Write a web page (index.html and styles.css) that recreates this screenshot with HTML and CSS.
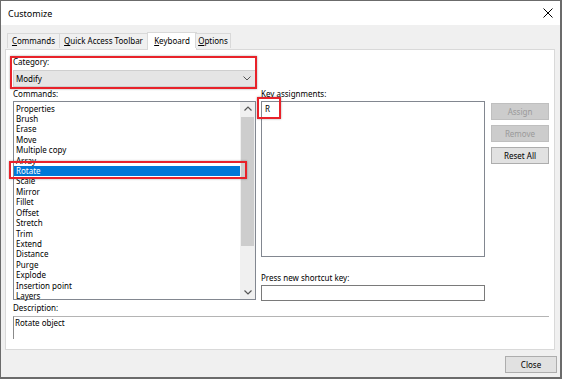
FILE: index.html
```html
<!DOCTYPE html>
<html>
<head>
<meta charset="utf-8">
<link rel="stylesheet" href="styles.css">
</head>
<body>
<div class="window">
  <div class="titlebar">
    <span class="title">Customize</span>
    <svg class="close-x" width="10" height="10" viewBox="0 0 10 10"><path d="M0.5 0.5 L9.5 9.5 M9.5 0.5 L0.5 9.5" stroke="#000" stroke-width="1" fill="none"/></svg>
  </div>
  <div class="body">
    <div class="tabs">
      <div class="tab t-commands"><u>C</u>ommands</div>
      <div class="tab t-qat"><u>Q</u>uick Access Toolbar</div>
      <div class="tab t-kbd active"><u>K</u>eyboard</div>
      <div class="tab t-opt"><u>O</u>ptions</div>
    </div>
    <div class="panel">
      <div class="columns">
        <div class="col-left">
          <div class="label">Category:</div>
          <div class="combo">
            <span>Modify</span>
            <svg class="chev" width="8" height="5" viewBox="0 0 8 5"><path d="M0.5 0.5 L4 4 L7.5 0.5" stroke="#555" stroke-width="1" fill="none"/></svg>
          </div>
          <div class="label">Commands:</div>
          <div class="listbox">
            <div class="items">
              <div class="item">Properties</div>
              <div class="item">Brush</div>
              <div class="item">Erase</div>
              <div class="item">Move</div>
              <div class="item">Multiple copy</div>
              <div class="item">Array</div>
              <div class="item selected">Rotate</div>
              <div class="item">Scale</div>
              <div class="item">Mirror</div>
              <div class="item">Fillet</div>
              <div class="item">Offset</div>
              <div class="item">Stretch</div>
              <div class="item">Trim</div>
              <div class="item">Extend</div>
              <div class="item">Distance</div>
              <div class="item">Purge</div>
              <div class="item">Explode</div>
              <div class="item">Insertion point</div>
              <div class="item">Layers</div>
            </div>
            <div class="scrollbar">
              <svg class="sb-arrow" width="8" height="5" viewBox="0 0 8 5"><path d="M0.5 4.5 L4 1 L7.5 4.5" stroke="#555" stroke-width="1.2" fill="none"/></svg>
              <div class="track"><div class="thumb"></div></div>
              <svg class="sb-arrow" width="8" height="5" viewBox="0 0 8 5"><path d="M0.5 0.5 L4 4 L7.5 0.5" stroke="#555" stroke-width="1.2" fill="none"/></svg>
            </div>
          </div>
        </div>
        <div class="col-right">
          <div class="label">Key assignments:</div>
          <div class="keyrow">
            <div class="keylist"><div class="key">R</div></div>
            <div class="buttons">
              <div class="btn disabled">Assign</div>
              <div class="btn disabled">Remove</div>
              <div class="btn">Reset All</div>
            </div>
          </div>
          <div class="label press">Press new shortcut key:</div>
          <div class="input"></div>
        </div>
      </div>
      <div class="label desc-label">Description:</div>
      <div class="desc">Rotate object</div>
    </div>
    <div class="footer">
      <div class="btn close-btn">Close</div>
    </div>
  </div>
  <div class="mark mark-cat"></div>
  <div class="mark mark-rot"></div>
  <div class="mark mark-key"></div>
</div>
</body>
</html>
```

FILE: styles.css
```css
* { box-sizing: border-box; }
html, body { margin: 0; padding: 0; background: #fff; }
body {
  font-family: "Noto Sans", "Open Sans", sans-serif;
  font-size: 8px;
  color: #000;
}
.window {
  position: relative;
  width: 562px;
  height: 379px;
  border: 1px solid #6b6b6b;
  border-right-width: 2px;
  border-bottom-width: 2px;
  background: #f0f0f0;
  display: flex;
  flex-direction: column;
}
.titlebar {
  height: 24px;
  background: #fff;
  display: flex;
  align-items: center;
  justify-content: space-between;
  padding: 0 7px 0 7px;
  flex: none;
}
.title { font-size: 9px; }
.body {
  flex: 1;
  display: flex;
  flex-direction: column;
  padding-top: 6px;
}
.tabs {
  display: flex;
  align-items: flex-end;
  height: 18px;
  padding-left: 6px;
  position: relative;
  z-index: 2;
}
.tab {
  height: 15px;
  line-height: 13px;
  text-align: center;
  background: #f0f0f0;
  border: 1px solid #d9d9d9;
  border-bottom: none;
  margin-bottom: 1px;
  white-space: nowrap;
}
.tab + .tab { margin-left: -1px; }
.t-commands { width: 53px; }
.t-qat { width: 89px; }
.t-kbd { width: 49px; }
.t-opt { width: 36px; }
.tab.active {
  height: 18px;
  line-height: 16px;
  background: #fff;
  margin-bottom: -1px;
  margin-left: -1px;
  margin-right: -1px;
  width: 50px;
}
.panel {
  margin-left: 4px;
  width: 550px;
  height: 301px;
  background: #fff;
  border: 1px solid #d9d9d9;
  padding: 7px 0 0 7px;
  flex: none;
}
.columns { display: flex; gap: 5px; }
.col-left { width: 243px; display: flex; flex-direction: column; }
.col-right { width: 288px; padding-top: 32px; display: flex; flex-direction: column; }
.label { height: 10px; line-height: 10px; white-space: nowrap; }
.combo {
  margin-top: 3px;
  height: 17px;
  background: #e5e5e5;
  border: 1px solid #cfcfcf;
  display: flex;
  align-items: center;
  justify-content: space-between;
  padding: 0 4px 0 2px;
  margin-bottom: 2px;
}
.listbox {
  margin-top: 2px;
  height: 199px;
  border: 1px solid #828790;
  display: flex;
}
.items { flex: 1; padding-top: 1.5px; }
.item {
  height: 10.43px;
  line-height: 10.43px;
  padding-left: 2px;
  white-space: nowrap;
}
.item.selected { background: #0078d7; color: #fff; }
.scrollbar {
  width: 15px;
  background: #f0f0f0;
  display: flex;
  flex-direction: column;
  align-items: center;
}
.sb-arrow { flex: none; margin: 4px 0; }
.track { flex: 1; width: 100%; padding: 0 1px; }
.thumb { margin-top: 2px; height: 129px; background: #cdcdcd; }
.keyrow { display: flex; gap: 6px; margin-top: 2px; }
.keylist {
  width: 224px;
  height: 156px;
  border: 1px solid #828790;
  padding: 2px 0 0 3px;
}
.key { line-height: 10px; }
.buttons { display: flex; flex-direction: column; gap: 5px; padding-top: 2px; }
.btn {
  width: 58px;
  height: 17px;
  line-height: 15px;
  text-align: center;
  background: #e1e1e1;
  border: 1px solid #adadad;
}
.btn.disabled { background: #cccccc; border-color: #bfbfbf; color: #9a9a9a; }
.press { margin-top: 16px; }
.input {
  margin-top: 2px;
  width: 224px;
  height: 16px;
  border: 1px solid #7a7a7a;
}
.desc-label { margin-top: 2px; }
.desc {
  margin-top: 3px;
  width: 536px;
  height: 23px;
  border-top: 1px solid #b4b4b4;
  border-left: 1px solid #8a8a8a;
  padding: 1px 0 0 1px;
  line-height: 10px;
}
.footer {
  flex: 1;
  display: flex;
  justify-content: flex-end;
  align-items: flex-start;
  padding: 6px 3px 0 0;
}
.close-btn { width: 52px; }
.mark {
  position: absolute;
  border: 2px solid #e8222a;
  box-shadow: 0 0 2px rgba(0,0,0,0.35);
  z-index: 5;
}
.mark-cat { left: 9px; top: 55px; width: 247px; height: 33px; }
.mark-rot { left: 8px; top: 160px; width: 238px; height: 18px; }
.mark-key { left: 256px; top: 96px; width: 24px; height: 22px; }
```
